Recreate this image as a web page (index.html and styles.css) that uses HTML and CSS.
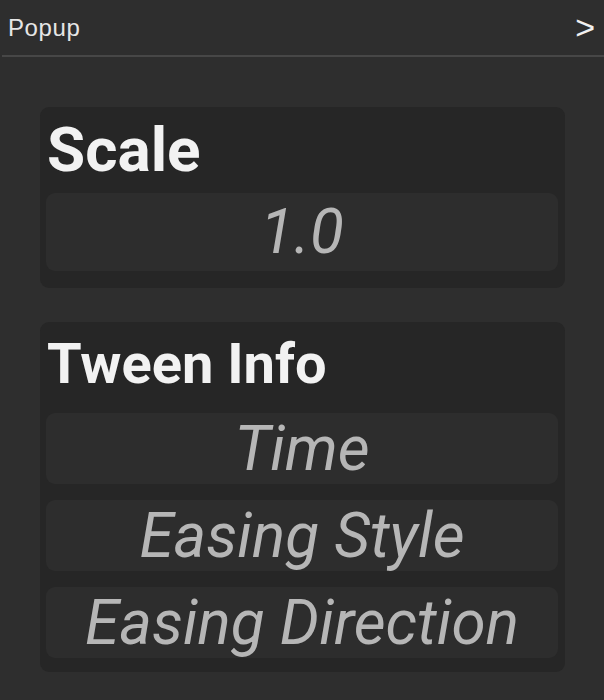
FILE: index.html
```html
<!DOCTYPE html>
<html lang="en">
<head>
    <meta charset="UTF-8">
    <meta name="viewport" content="width=device-width, initial-scale=1.0">
    <title>Popup</title>
    <link rel="stylesheet" href="styles.css">
</head>
<body>
    <div class="popup">
        <div class="topbar">
            <span class="title">Popup</span>
            <span class="toggle">&gt;</span>
        </div>

        <div class="content">
            <div class="group">
                <div class="group-title scale-title">Scale</div>
                <div class="field field-big">1.0</div>
            </div>

            <div class="group">
                <div class="group-title tween-title">Tween Info</div>
                <div class="field-list">
                    <div class="field">Time</div>
                    <div class="field">Easing Style</div>
                    <div class="field">Easing Direction</div>
                </div>
            </div>
        </div>
    </div>
</body>
</html>
```

FILE: styles.css
```css
/* popup panel */
body {
    margin: 0;
    background-color: #2e2e2e;
    font-family: Roboto, "Liberation Sans", Arial, sans-serif;
}

.popup {
    width: 604px;
    height: 700px;
    background-color: #2e2e2e;
    overflow: hidden;
}

.topbar {
    display: flex;
    justify-content: space-between;
    align-items: flex-end;
    height: 57px;
    margin-left: 2px;
    padding: 0 9px 0 6px;
    border-bottom: 2px solid #474747;
    box-sizing: border-box;
}

.title {
    font-family: "Liberation Sans", Arial, sans-serif;
    font-size: 24px;
    line-height: 24px;
    padding-bottom: 15px;
    color: #e6e6e6;
    letter-spacing: 0.6px;
}

.toggle {
    font-family: "Liberation Sans", Arial, sans-serif;
    font-size: 34px;
    line-height: 34px;
    padding-bottom: 11px;
    color: #f0f0f0;
}

.content {
    display: flex;
    flex-direction: column;
    gap: 34px;
    padding: 50px 39px 0 40px;
}

.group {
    background-color: #262626;
    border-radius: 9px;
    padding: 0 7px 0 6px;
}

.group-title {
    font-weight: bold;
    color: #f2f2f2;
    padding-left: 1px;
}

.scale-title {
    font-size: 62px;
    line-height: 74px;
    padding-top: 6px;
    height: 86px;
    box-sizing: border-box;
}

.tween-title {
    font-size: 56px;
    line-height: 66px;
    padding-top: 9px;
    height: 91px;
    box-sizing: border-box;
}

.field {
    background-color: #2d2d2d;
    border-radius: 9px;
    color: #b6b6b6;
    font-style: italic;
    font-size: 62px;
    height: 71px;
    line-height: 71px;
    text-align: center;
    white-space: nowrap;
}

.field-big {
    height: 78px;
    line-height: 78px;
    margin-bottom: 17px;
}

.field-list {
    display: flex;
    flex-direction: column;
    gap: 16px;
    padding-bottom: 14px;
}
```
